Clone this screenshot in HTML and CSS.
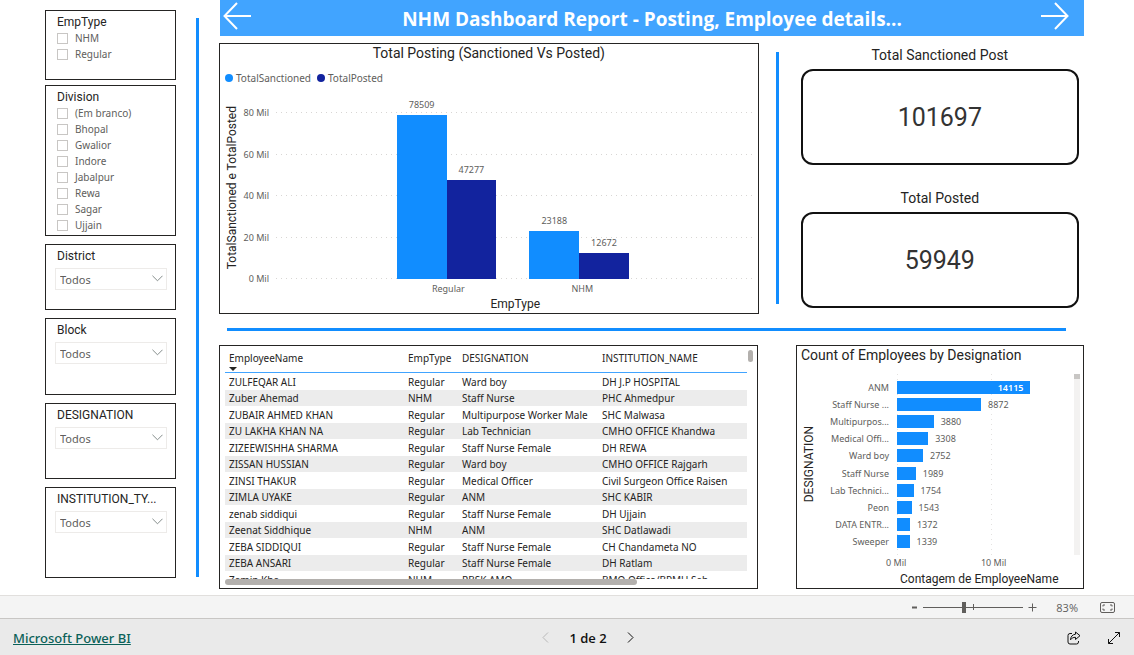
FILE: index.html
```html
<!DOCTYPE html>
<html lang="pt-BR">
<head>
<meta charset="utf-8">
<meta name="viewport" content="width=device-width, initial-scale=1">
<title>NHM Dashboard Report</title>
<link rel="stylesheet" href="styles.css">
</head>
<body>
<div class="page">
  <div class="report">
    <aside class="filters">
      <div class="filter-group">
        <fieldset class="panel slicer slicer-emp">
          <legend class="slicer-title">EmpType</legend>
          <div class="checks">
            <label class="check"><input type="checkbox">NHM</label>
            <label class="check"><input type="checkbox">Regular</label>
          </div>
        </fieldset>
        <fieldset class="panel slicer slicer-division">
          <legend class="slicer-title">Division</legend>
          <div class="checks">
            <label class="check"><input type="checkbox">(Em branco)</label>
            <label class="check"><input type="checkbox">Bhopal</label>
            <label class="check"><input type="checkbox">Gwalior</label>
            <label class="check"><input type="checkbox">Indore</label>
            <label class="check"><input type="checkbox">Jabalpur</label>
            <label class="check"><input type="checkbox">Rewa</label>
            <label class="check"><input type="checkbox">Sagar</label>
            <label class="check"><input type="checkbox">Ujjain</label>
          </div>
        </fieldset>
      </div>
      <div class="panel slicer">
        <label class="slicer-title" for="district">District</label>
        <div class="dropdown">
          <select id="district"><option>Todos</option></select>
          <svg class="chevron" viewBox="0 0 12 7" aria-hidden="true"><path d="M.5.5 6 6 11.5.5"/></svg>
        </div>
      </div>
      <div class="panel slicer">
        <label class="slicer-title" for="block">Block</label>
        <div class="dropdown">
          <select id="block"><option>Todos</option></select>
          <svg class="chevron" viewBox="0 0 12 7" aria-hidden="true"><path d="M.5.5 6 6 11.5.5"/></svg>
        </div>
      </div>
      <div class="panel slicer">
        <label class="slicer-title" for="designation">DESIGNATION</label>
        <div class="dropdown">
          <select id="designation"><option>Todos</option></select>
          <svg class="chevron" viewBox="0 0 12 7" aria-hidden="true"><path d="M.5.5 6 6 11.5.5"/></svg>
        </div>
      </div>
      <div class="panel slicer">
        <label class="slicer-title" for="institution">INSTITUTION_TY...</label>
        <div class="dropdown">
          <select id="institution"><option>Todos</option></select>
          <svg class="chevron" viewBox="0 0 12 7" aria-hidden="true"><path d="M.5.5 6 6 11.5.5"/></svg>
        </div>
      </div>
    </aside>

    <div class="rule rule-side"></div>

    <main class="main">
      <header class="banner">
        <button class="nav-arrow" type="button" aria-label="Previous page">
          <svg viewBox="0 0 28 28" aria-hidden="true"><path d="M14 1 1.500 14 14 27M1.500 14H28"/></svg>
        </button>
        <h1>NHM Dashboard Report - Posting, Employee details...</h1>
        <button class="nav-arrow next" type="button" aria-label="Next page">
          <svg viewBox="0 0 28 28" aria-hidden="true"><path d="M14 1 26.500 14 14 27M26.500 14H0"/></svg>
        </button>
      </header>

      <div class="row">
        <section class="panel posting">
          <h2 class="posting-title">Total Posting (Sanctioned Vs Posted)</h2>
          <ul class="legend">
            <li><span class="dot light"></span>TotalSanctioned</li>
            <li><span class="dot dark"></span>TotalPosted</li>
          </ul>
          <div class="posting-chart">
            <div class="y-title">TotalSanctioned e TotalPosted</div>
            <div class="y-axis"><span>80 Mil</span><span>60 Mil</span><span>40 Mil</span><span>20 Mil</span><span>0 Mil</span></div>
            <div class="plot">
              <div class="gridlines"><i></i><i></i><i></i><i></i><i></i></div>
              <div class="columns">
                <div class="pair">
                  <div class="column light" style="height:98.1%"><span>78509</span></div>
                  <div class="column dark" style="height:59.1%"><span>47277</span></div>
                </div>
                <div class="pair">
                  <div class="column light" style="height:29%"><span>23188</span></div>
                  <div class="column dark" style="height:15.8%"><span>12672</span></div>
                </div>
              </div>
            </div>
            <div class="x-axis"><span>Regular</span><span>NHM</span></div>
            <div class="x-title">EmpType</div>
          </div>
        </section>

        <div class="rule rule-middle"></div>

        <div class="cards">
          <section class="card">
            <h2>Total Sanctioned Post</h2>
            <p>101697</p>
          </section>
          <section class="card">
            <h2>Total Posted</h2>
            <p>59949</p>
          </section>
        </div>
      </div>

      <div class="rule rule-across"></div>

      <div class="row row-lower">
        <section class="panel employees">
          <div class="table-scroll">
            <table>
              <colgroup><col class="c-name"><col class="c-type"><col class="c-role"><col></colgroup>
              <thead>
                <tr><th><span class="sorted">EmployeeName</span></th><th>EmpType</th><th>DESIGNATION</th><th>INSTITUTION_NAME</th></tr>
              </thead>
              <tbody>
                <tr><td>ZULFEQAR ALI</td><td>Regular</td><td>Ward boy</td><td>DH J.P HOSPITAL</td></tr>
                <tr><td>Zuber Ahemad</td><td>NHM</td><td>Staff Nurse</td><td>PHC Ahmedpur</td></tr>
                <tr><td>ZUBAIR AHMED KHAN</td><td>Regular</td><td>Multipurpose Worker Male</td><td>SHC Malwasa</td></tr>
                <tr><td>ZU LAKHA KHAN NA</td><td>Regular</td><td>Lab Technician</td><td>CMHO OFFICE Khandwa</td></tr>
                <tr><td>ZIZEEWISHHA SHARMA</td><td>Regular</td><td>Staff Nurse Female</td><td>DH REWA</td></tr>
                <tr><td>ZISSAN HUSSIAN</td><td>Regular</td><td>Ward boy</td><td>CMHO OFFICE Rajgarh</td></tr>
                <tr><td>ZINSI THAKUR</td><td>Regular</td><td>Medical Officer</td><td>Civil Surgeon Office Raisen</td></tr>
                <tr><td>ZIMLA UYAKE</td><td>Regular</td><td>ANM</td><td>SHC KABIR</td></tr>
                <tr><td>zenab siddiqui</td><td>Regular</td><td>Staff Nurse Female</td><td>DH Ujjain</td></tr>
                <tr><td>Zeenat Siddhique</td><td>NHM</td><td>ANM</td><td>SHC Datlawadi</td></tr>
                <tr><td>ZEBA SIDDIQUI</td><td>Regular</td><td>Staff Nurse Female</td><td>CH Chandameta NO</td></tr>
                <tr><td>ZEBA ANSARI</td><td>Regular</td><td>Staff Nurse Female</td><td>DH Ratlam</td></tr>
                <tr><td>Zamin Kha</td><td>NHM</td><td>RBSK AMO</td><td>BMO Office/BPMU Sah</td></tr>
              </tbody>
            </table>
          </div>
          <div class="v-track"><div class="v-thumb"></div></div>
          <div class="h-track"><div class="h-thumb"></div></div>
        </section>

        <section class="panel designations">
          <h2>Count of Employees by Designation</h2>
          <div class="bar-chart">
            <div class="y-title">DESIGNATION</div>
            <div class="names">
              <span>ANM</span><span>Staff Nurse ...</span><span>Multipurpos...</span><span>Medical Offi...</span><span>Ward boy</span><span>Staff Nurse</span><span>Lab Technici...</span><span>Peon</span><span>DATA ENTR...</span><span>Sweeper</span>
            </div>
            <div class="bars">
              <div class="bar"><i style="width:80.4%"><b>14115</b></i></div>
              <div class="bar"><i style="width:50.6%"></i><span>8872</span></div>
              <div class="bar"><i style="width:22.1%"></i><span>3880</span></div>
              <div class="bar"><i style="width:18.8%"></i><span>3308</span></div>
              <div class="bar"><i style="width:15.7%"></i><span>2752</span></div>
              <div class="bar"><i style="width:11.3%"></i><span>1989</span></div>
              <div class="bar"><i style="width:10%"></i><span>1754</span></div>
              <div class="bar"><i style="width:8.8%"></i><span>1543</span></div>
              <div class="bar"><i style="width:7.8%"></i><span>1372</span></div>
              <div class="bar"><i style="width:7.6%"></i><span>1339</span></div>
            </div>
            <div class="bar-track"><div class="bar-thumb"></div></div>
            <div class="bar-axis"><span>0 Mil</span><span>10 Mil</span></div>
            <div class="bar-title">Contagem de EmployeeName</div>
          </div>
        </section>
      </div>
    </main>
  </div>

  <div class="zoom-bar">
    <button type="button" aria-label="Zoom out"><svg class="sign" viewBox="0 0 9 9" aria-hidden="true"><path d="M3 4.500h5"/></svg></button>
    <div class="slider"><input type="range" min="0" max="100" value="40" aria-label="Zoom"></div>
    <button type="button" aria-label="Zoom in"><svg class="sign plus" viewBox="0 0 9 9" aria-hidden="true"><path d="M.5 4.500h8M4.500.5v8"/></svg></button>
    <span class="percent">83%</span>
    <button type="button" aria-label="Fit to page">
      <svg class="fit" viewBox="0 0 15 11" aria-hidden="true"><rect x=".5" y=".5" width="14" height="10" rx="1.500"/><path d="M3 4.500V3h2M10 3h2v1.500M12 6.500V8h-2M5 8H3V6.500"/></svg>
    </button>
  </div>

  <footer class="footer">
    <a class="brand" href="#">Microsoft Power BI</a>
    <nav class="pager">
      <button type="button" aria-label="Previous" disabled><svg viewBox="0 0 7 11" aria-hidden="true"><path d="M6 .5 1 5.500l5 5"/></svg></button>
      <span>1 de 2</span>
      <button type="button" aria-label="Next"><svg viewBox="0 0 7 11" aria-hidden="true"><path d="m1 .5 5 5-5 5"/></svg></button>
    </nav>
    <div class="actions">
      <button type="button" aria-label="Share"><svg viewBox="0 0 14 14" aria-hidden="true"><path d="M5 2.500H3a2 2 0 0 0-2 2V11a2 2 0 0 0 2 2h6.500a2 2 0 0 0 2-2v-1M8.500 1 13 4.700 8.500 8.500V6.300C6.300 6.300 4.800 7 3.500 8.800 3.700 5.700 5.500 3.500 8.500 3.200z"/></svg></button>
      <button type="button" aria-label="Full screen"><svg viewBox="0 0 14 14" aria-hidden="true"><path d="M1.500 12.500l11-11M8 1.500h4.500V6M1.500 8v4.500H6"/></svg></button>
    </div>
  </footer>
</div>
</body>
</html>
```
FILE: styles.css
```css
* {
  box-sizing: border-box;
}

body {
  margin: 0;
  background: #fff;
  color: #252423;
  font-family: "Noto Sans", "Open Sans", sans-serif;
  font-size: 10px;
}

h1, h2, p, ul, fieldset {
  margin: 0;
  padding: 0;
}

button {
  display: flex;
  align-items: center;
  justify-content: center;
  padding: 0;
  border: 0;
  background: none;
  color: inherit;
}

svg {
  fill: none;
  stroke: currentColor;
}

.page {
  display: flex;
  flex-direction: column;
  height: 100vh;
  min-height: 600px;
}

.report {
  flex: 1;
  min-height: 0;
  display: grid;
  grid-template-columns: 131px 3px minmax(0, 1fr);
  grid-template-rows: minmax(0, 1fr);
  column-gap: 20px;
  padding: 0 50px 6px 45px;
}

.panel {
  border: 1px solid #252423;
  background: #fff;
  min-width: 0;
}

.rule {
  background: #118dff;
}

.rule-side {
  margin: 18px 0 12px;
}

.rule-middle {
  margin: 9px 0 10px;
}

.rule-across {
  height: 3px;
  margin: 0 18px 0 8px;
}

/* Filters */

.filters {
  display: grid;
  grid-template-rows: 226fr 66fr 77fr 76fr 91fr;
  row-gap: 8px;
  padding: 10px 0 11px;
}

.filter-group {
  display: grid;
  grid-template-rows: 70fr 151fr;
  row-gap: 5px;
}

.slicer {
  padding: 3px 8px 0 9px;
}

.slicer-title {
  display: block;
  float: left;
  width: 100%;
  padding: 0 2px;
  font-family: Roboto, sans-serif;
  font-size: 12px;
  line-height: 16px;
  white-space: nowrap;
}

.checks {
  clear: both;
  padding: 0 2px;
}

.check {
  display: flex;
  align-items: center;
  gap: 7px;
  height: 16px;
  color: #605e5c;
}

.check input {
  appearance: none;
  width: 11px;
  height: 11px;
  margin: 0;
  border: 1px solid #c8c6c4;
}

.dropdown {
  clear: both;
  position: relative;
  padding-top: 4px;
}

.dropdown select {
  appearance: none;
  display: block;
  width: 100%;
  height: 22px;
  padding: 0 4px;
  border: 1px solid #edebe9;
  border-radius: 0;
  background: #fff;
  color: #605e5c;
  font: inherit;
  font-size: 11px;
}

.chevron {
  position: absolute;
  right: 4px;
  bottom: 8px;
  width: 11px;
  height: 7px;
  color: #7a8280;
}

/* Main area */

.main {
  display: grid;
  grid-template-rows: 36px minmax(0, 264fr) 3px minmax(0, 244fr);
  row-gap: 14px;
  min-width: 0;
}

.banner {
  display: grid;
  grid-template-columns: 1fr auto 1fr;
  align-items: center;
  margin-left: 1px;
  padding: 0 3px 4px;
  background: #41a4ff;
  color: #fff;
}

.banner h1 {
  padding-top: 6px;
  font-family: "Open Sans", sans-serif;
  font-size: 19px;
  line-height: 26px;
  white-space: nowrap;
}

.nav-arrow {
  justify-self: start;
}

.next {
  justify-self: end;
  margin-right: 12px;
}

.nav-arrow svg {
  width: 28px;
  height: 28px;
  stroke-width: 2;
}

.row {
  display: grid;
  grid-template-columns: minmax(0, 539fr) 3px minmax(0, 288fr);
  grid-template-rows: minmax(0, 1fr);
  column-gap: 17px;
  margin-top: -7px;
}

.row-lower {
  grid-template-columns: minmax(0, 539fr) minmax(0, 288fr);
  column-gap: 38px;
  margin-top: 0;
}

h2, .y-title, .x-title, .bar-title {
  font-family: Roboto, sans-serif;
  font-weight: 400;
}

h2 {
  font-size: 14px;
  line-height: 18px;
}

/* Posting chart */

.posting {
  display: flex;
  flex-direction: column;
}

.posting-title {
  text-align: center;
}

.legend {
  display: flex;
  gap: 6px;
  padding: 8px 5px 0;
  list-style: none;
  color: #605e5c;
  line-height: 16px;
}

.legend li {
  display: flex;
  align-items: center;
  gap: 3px;
}

.dot {
  width: 8px;
  height: 8px;
  border-radius: 50%;
}

.light {
  background: #118dff;
}

.dark {
  background: #12239e;
}

.posting-chart {
  flex: 1;
  min-height: 0;
  display: grid;
  grid-template-columns: 20px 27px minmax(0, 1fr);
  grid-template-rows: minmax(0, 1fr) 18px 16px;
  padding: 26px 3px 0 2px;
}

.y-title {
  writing-mode: vertical-rl;
  transform: rotate(180deg);
  justify-self: center;
  align-self: center;
  font-size: 12px;
  line-height: 16px;
  white-space: nowrap;
}

.posting-chart .y-title {
  margin-bottom: 16px;
}

.y-axis, .gridlines {
  display: flex;
  flex-direction: column;
  justify-content: space-between;
}

.y-axis {
  text-align: right;
  font-size: 9px;
  color: #605e5c;
}

.y-axis span {
  height: 1px;
  display: flex;
  align-items: center;
  justify-content: flex-end;
  white-space: nowrap;
}

.plot {
  position: relative;
  margin-left: 7px;
}

.gridlines {
  height: 100%;
}

.gridlines i {
  height: 1px;
  background: repeating-linear-gradient(90deg, #d8d6d4 0 1px, transparent 1px 5px);
}

.columns {
  position: absolute;
  inset: 0 5px 0 0;
  display: flex;
  justify-content: center;
  gap: 7%;
}

.pair {
  display: flex;
  align-items: flex-end;
  width: 21%;
}

.column {
  flex: 1;
  display: flex;
  justify-content: center;
}

.column span {
  height: 16px;
  margin-top: -18px;
  font-size: 9px;
  line-height: 16px;
  color: #605e5c;
}

.x-axis {
  grid-column: 3;
  display: flex;
  justify-content: center;
  margin-left: 7px;
  font-size: 9px;
  line-height: 20px;
  color: #605e5c;
}

.x-axis span {
  width: 28%;
  text-align: center;
}

.x-title {
  grid-column: 3;
  margin-left: 7px;
  font-size: 12px;
  line-height: 14px;
  text-align: center;
}

/* Cards */

.cards {
  display: grid;
  grid-template-rows: 1fr 1fr;
  row-gap: 24px;
  padding: 3px 5px 6px;
}

.card {
  display: flex;
  flex-direction: column;
  gap: 5px;
  text-align: center;
}

.card p {
  flex: 1;
  display: flex;
  align-items: center;
  justify-content: center;
  border: 2px solid #111;
  border-radius: 12px;
  color: #333;
  font-family: Roboto, sans-serif;
  font-size: 25px;
}

/* Employee table */

.employees {
  display: grid;
  grid-template-columns: minmax(0, 1fr) 7px;
  grid-template-rows: minmax(0, 1fr) 6px;
  padding: 4px 3px 3px 5px;
}

.table-scroll {
  overflow: hidden;
}

table {
  width: 100%;
  table-layout: fixed;
  border-spacing: 0;
  white-space: nowrap;
}

.c-name {
  width: 179px;
}

.c-type {
  width: 54px;
}

.c-role {
  width: 140px;
}

th, td {
  height: 17px;
  padding: 0 4px;
  line-height: 16px;
  text-align: left;
}

th {
  height: 23px;
  padding-bottom: 6px;
  border-bottom: 1px solid #41a4ff;
  font-weight: 400;
}

.sorted {
  position: relative;
}

.sorted::after {
  content: "";
  position: absolute;
  left: 0;
  top: 16px;
  border: 4px solid transparent;
  border-top-color: #252423;
  border-bottom: 0;
}

tbody tr:nth-child(even) {
  background: #ececec;
}

tbody tr:nth-child(even) td {
  height: 16px;
}

.v-thumb {
  width: 5px;
  height: 12px;
  margin-left: 1px;
  border-radius: 3px;
  background: #b3b0ad;
}

.h-thumb {
  width: 79%;
  height: 6px;
  border-radius: 3px;
  background: #b3b0ad;
}

/* Designation chart */

.designations {
  display: flex;
  flex-direction: column;
}

.designations h2 {
  padding-left: 4px;
}

.bar-chart {
  flex: 1;
  min-height: 0;
  display: grid;
  grid-template-columns: 18px 79px minmax(0, 1fr) 6px;
  grid-template-rows: minmax(0, 1fr) 16px 16px;
  padding: 10px 3px 1px;
}

.names, .bars {
  display: grid;
  grid-template-rows: repeat(10, 1fr);
  align-items: center;
  padding: 5px 0;
  font-size: 9px;
  line-height: 13px;
  color: #605e5c;
}

.names {
  padding-right: 8px;
  text-align: right;
  white-space: nowrap;
}

.bars {
  margin-right: 11px;
  background:
    repeating-linear-gradient(#e4e2e0 0 1px, transparent 1px 5px) 0 0 / 1px 100% no-repeat,
    repeating-linear-gradient(#e4e2e0 0 1px, transparent 1px 5px) 57% 0 / 1px 100% no-repeat;
}

.bar {
  display: flex;
  align-items: center;
  gap: 7px;
}

.bar i {
  height: 13px;
  background: #118dff;
  text-align: right;
  font-style: normal;
}

.bar b {
  padding-right: 7px;
  color: #fff;
  font-weight: 600;
}

.bar-track {
  background: #f3f2f1;
}

.bar-thumb {
  height: 5px;
  background: #c8c6c4;
}

.bar-axis {
  grid-column: 3;
  display: flex;
  justify-content: space-between;
  width: 68%;
  margin-left: -11px;
  font-size: 9px;
  line-height: 16px;
  color: #605e5c;
}

.bar-title {
  grid-column: 3;
  font-size: 12px;
  line-height: 16px;
  white-space: nowrap;
  padding-left: 3px;
}

/* Zoom bar */

.zoom-bar {
  display: flex;
  align-items: center;
  justify-content: flex-end;
  height: 23px;
  padding: 0 19px;
  border-top: 1px solid #e1dfdd;
  background: #f4f4f4;
  color: #605e5c;
  font-family: "Open Sans", sans-serif;
  font-size: 11px;
}

.sign {
  width: 9px;
  height: 9px;
  stroke-width: 2;
}

.plus {
  stroke-width: 1;
}

.slider {
  width: 100px;
  height: 12px;
  margin: 0 5px;
  background:
    linear-gradient(#605e5c, #605e5c) 50% 3px / 1px 6px no-repeat,
    linear-gradient(#605e5c, #605e5c) 0 6px / 100% 1px no-repeat;
}

.slider input {
  appearance: none;
  display: block;
  width: 100%;
  height: 12px;
  margin: 0;
  background: none;
}

.slider input::-webkit-slider-thumb {
  appearance: none;
  width: 4px;
  height: 11px;
  background: #605e5c;
}

.percent {
  margin: 0 22px 0 19px;
}

.fit {
  width: 15px;
  height: 11px;
}

/* Footer */

.footer {
  display: grid;
  grid-template-columns: 1fr auto 1fr;
  align-items: center;
  height: 37px;
  padding: 1px 13px 0;
  border-top: 1px solid #c8c6c4;
  background: #eaeaea;
  color: #111;
}

.brand {
  color: #0b6158;
  font-size: 13px;
  font-weight: 500;
}

.pager {
  display: flex;
  align-items: center;
  gap: 20px;
  padding-right: 6px;
  margin-left: 48px;
  font-family: "Open Sans", sans-serif;
  font-size: 13px;
  font-weight: 600;
}

.pager svg {
  width: 7px;
  height: 11px;
}

.pager button:disabled {
  color: #b8b8b8;
}

.actions {
  display: flex;
  justify-content: flex-end;
  gap: 26px;
}

.actions svg {
  width: 14px;
  height: 14px;
}
```
